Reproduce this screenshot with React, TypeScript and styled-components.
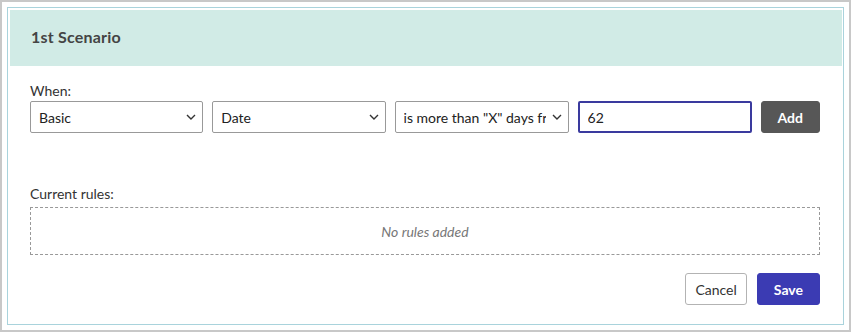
import styled, { createGlobalStyle } from 'styled-components';

const GlobalStyle = createGlobalStyle`
  html, body {
    margin: 0;
    padding: 0;
    background: #ffffff;
  }
  body {
    font-family: Lato, "Noto Sans", sans-serif;
    color: #333;
  }
`;

const Frame = styled.div`
  box-sizing: border-box;
  width: 851px;
  height: 332px;
  border: 2px solid #c8c8c8;
  padding: 5px;
  background: #fff;
`;

const Card = styled.div`
  box-sizing: border-box;
  height: 100%;
  border: 1px solid #a9d3dc;
  padding: 2px 1px 2px 2px;
  display: flex;
  flex-direction: column;
`;

const Header = styled.div`
  height: 56px;
  background-color: #d1ebe6;
  display: flex;
  align-items: center;
  padding: 0 21px 4px;
  box-sizing: border-box;
`;

const Title = styled.h2`
  margin: 0;
  font-size: 16px;
  font-weight: 700;
  color: #444;
  letter-spacing: 0.2px;
`;

const Body = styled.div`
  padding: 17px 22px 0 20px;
  display: flex;
  flex-direction: column;
`;

const Label = styled.label`
  font-size: 14px;
  color: #333;
  line-height: 16px;
  margin-bottom: 2px;
`;

const ConditionRow = styled.div`
  display: flex;
  gap: 9px;
  align-items: center;
`;

const chevron = `url("data:image/svg+xml,%3Csvg xmlns='http://www.w3.org/2000/svg' width='10' height='6' viewBox='0 0 10 6'%3E%3Cpath d='M1 1l4 4 4-4' fill='none' stroke='%23333' stroke-width='1.4'/%3E%3C/svg%3E")`;

const Select = styled.select`
  appearance: none;
  box-sizing: border-box;
  width: 174px;
  height: 32px;
  border: 1px solid #999;
  border-radius: 2px;
  background: #fff ${chevron} no-repeat right 6px center;
  padding: 0 22px 0 8px;
  font-family: inherit;
  font-size: 14px;
  color: #222;
  white-space: nowrap;
  overflow: hidden;
  text-overflow: clip;
`;

const NumberInput = styled.input`
  box-sizing: border-box;
  width: 174px;
  height: 32px;
  border: 2px solid #3a3a9e;
  border-radius: 2px;
  padding: 0 8px;
  font-family: inherit;
  font-size: 14px;
  color: #222;
  outline: none;
`;

type ButtonProps = {
  $variant: 'dark' | 'primary' | 'outline';
};

const Button = styled.button<ButtonProps>`
  box-sizing: border-box;
  height: 32px;
  padding: 0 ${(p) => (p.$variant === 'outline' ? 9 : 16)}px;
  border-radius: 3px;
  font-family: inherit;
  font-size: 14px;
  font-weight: ${(p) => (p.$variant === 'outline' ? 400 : 700)};
  cursor: pointer;
  border: 1px solid
    ${(p) => (p.$variant === 'dark' ? '#575757' : p.$variant === 'primary' ? '#3b3bb3' : '#b3b3b3')};
  background: ${(p) => (p.$variant === 'dark' ? '#575757' : p.$variant === 'primary' ? '#3b3bb3' : '#fff')};
  color: ${(p) => (p.$variant === 'outline' ? '#333' : '#fff')};
`;

const RulesSection = styled.div`
  margin-top: 53px;
  display: flex;
  flex-direction: column;
`;

const RulesBox = styled.div`
  box-sizing: border-box;
  height: 48px;
  margin-top: 3px;
  border: 1px dashed #999;
  display: flex;
  align-items: center;
  justify-content: center;
`;

const EmptyText = styled.p`
  margin: 0;
  font-size: 14px;
  font-style: italic;
  color: #777;
`;

const Footer = styled.div`
  display: flex;
  justify-content: flex-end;
  gap: 10px;
  margin-top: 18px;
`;

export default function App() {
  return (
    <>
      <GlobalStyle />
      <Frame>
        <Card>
          <Header>
            <Title>1st Scenario</Title>
          </Header>
          <Body>
            <Label>When:</Label>
            <ConditionRow>
              <Select defaultValue="basic">
                <option value="basic">Basic</option>
              </Select>
              <Select defaultValue="date">
                <option value="date">Date</option>
              </Select>
              <Select defaultValue="more">
                <option value="more">is more than "X" days from today</option>
              </Select>
              <NumberInput defaultValue="62" />
              <Button $variant="dark">Add</Button>
            </ConditionRow>
            <RulesSection>
              <Label>Current rules:</Label>
              <RulesBox>
                <EmptyText>No rules added</EmptyText>
              </RulesBox>
            </RulesSection>
            <Footer>
              <Button $variant="outline">Cancel</Button>
              <Button $variant="primary">Save</Button>
            </Footer>
          </Body>
        </Card>
      </Frame>
    </>
  );
}
